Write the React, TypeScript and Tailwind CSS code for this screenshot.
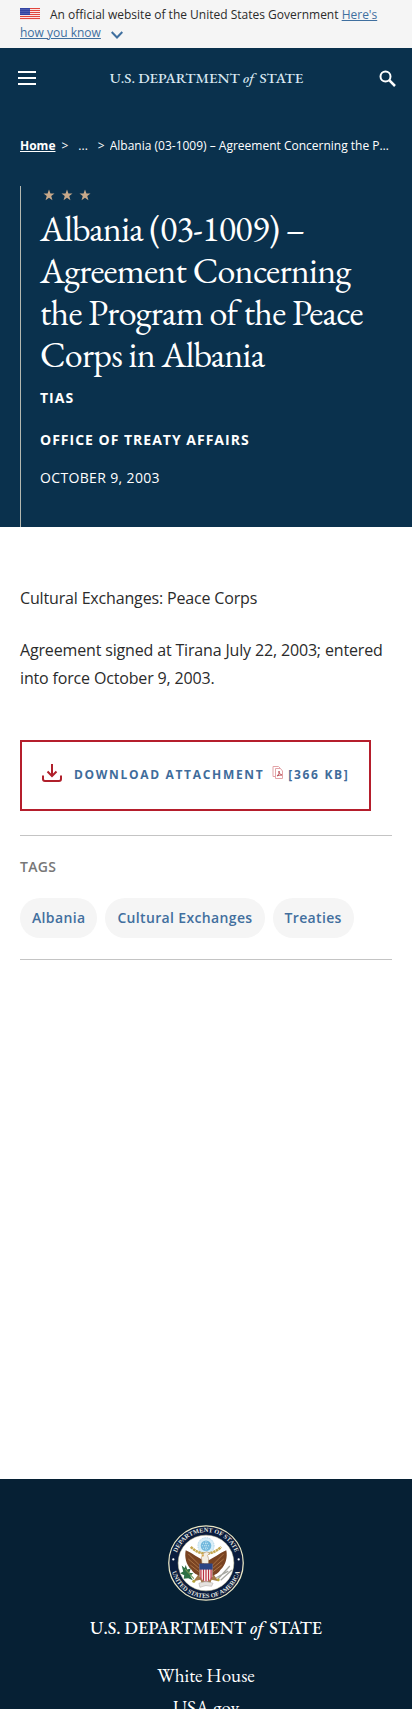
import React from "react";

const serif = "font-['EB_Garamond','Liberation_Serif',serif]";

function Flag() {
  return (
    <svg viewBox="0 0 20 12" className="mr-[10px] inline-block h-3 w-5 align-[-1px]" aria-hidden="true">
      <rect width="20" height="12" fill="#fff" />
      {[0, 2, 4, 6, 8, 10].map((y) => (
        <rect key={y} y={y} width="20" height="1.15" fill="#e0453c" />
      ))}
      <rect width="10" height="7" fill="#2f3f9f" />
      {[1, 3, 5].map((y) =>
        [1, 3, 5, 7, 9].map((x) => <circle key={`${x}-${y}`} cx={x} cy={y + 0.3} r="0.45" fill="#b9c0ee" />),
      )}
    </svg>
  );
}

function Star() {
  return (
    <svg viewBox="0 0 24 24" className="size-3" fill="#c8a98a" aria-hidden="true">
      <path d="M12 1l2.9 7.9 8.1.2-6.5 5.1L18.900 22.500 12 17.600 5.100 22.500l2.400-8.300L1 9.100l8.100-.2z" />
    </svg>
  );
}

function Seal() {
  return (
    <svg viewBox="0 0 150 150" className="size-[76px]" role="img" aria-label="Department of State seal">
      <defs>
        <path id="arcTop" d="M14 75a61 61 0 0 1 122 0" />
        <path id="arcBottom" d="M6 75a69 69 0 0 0 138 0" />
      </defs>
      <circle cx="75" cy="75" r="73.500" fill="#0a1c3d" stroke="#e9e6c4" strokeWidth="2.500" />
      <circle cx="75" cy="75" r="55" fill="#fff" stroke="#d9d2a6" strokeWidth="1" />
      <g fill="#e4e6e0" fontFamily="Liberation Serif, serif" fontSize="12.500" fontWeight="700" textAnchor="middle">
        <text>
          <textPath href="#arcTop" startOffset="50%">DEPARTMENT OF STATE</textPath>
        </text>
        <text>
          <textPath href="#arcBottom" startOffset="50%">UNITED STATES OF AMERICA</textPath>
        </text>
      </g>
      <circle cx="10.500" cy="68" r="2.200" fill="#fff" />
      <circle cx="139.500" cy="68" r="2.200" fill="#fff" />
      <circle cx="75" cy="41" r="16" fill="#d8eef8" stroke="#9ac8df" strokeWidth="1.500" strokeDasharray="2 1.500" />
      <circle cx="75" cy="41" r="10.500" fill="#73b9dd" />
      <path d="M69 36h12M67 41h16M69 46h12M75 32v18" stroke="#c9e7f5" strokeWidth="2" strokeDasharray="2 2" />
      <path d="M45 43q14 14 30 13q16 1 30-13" fill="none" stroke="#c5a74f" strokeWidth="5" strokeDasharray="5 1" />
      <path d="M71 70C60 66 49 56 35 50c-3 13 1 29 11 38 3 5 7 9 12 10l5 8 8-12zM79 70c11-4 22-14 36-20 3 13-1 29-11 38-3 5-7 9-12 10l-5 8-8-12z" fill="#794322" />
      <path d="M40 57l22 22M40 67l21 18M44 79l17 13M110 57L88 79M110 67L89 85M106 79L89 92" stroke="#b07849" strokeWidth="1.800" />
      <path d="M67 76l-1-12 5-9q6-5 11 1l-4 4 2 6v10z" fill="#f3eee4" stroke="#a57b54" strokeWidth="1" />
      <path d="M71 58l-6 3 5 1z" fill="#d9a035" />
      <path d="M59 99l-9 12 14-3 3 8h16l3-8 14 3-9-12z" fill="#a37745" />
      <path d="M62 77h26v24q-3 8-13 12-10-4-13-12z" fill="#fff" stroke="#804936" strokeWidth="1" />
      <path d="M65 87v20M70 87v23M75 87v25M80 87v23M85 87v20" stroke="#bb3041" strokeWidth="2.500" />
      <path d="M62 76h26v12H62z" fill="#2c4484" />
      <path d="M27 80l6 5 2-6 3 9 7-2-3 8 8 1-6 5 5 9-9-4-9 1 1-7-8-4 6-3z" fill="#2f7045" />
      <path d="M34 87l17 19" stroke="#719450" strokeWidth="2" />
      <path d="M99 106l23-25M104 109l22-20M95 104l24-13" stroke="#a7a9a2" strokeWidth="2.500" />
      <circle cx="51" cy="111" r="3" fill="#b5a43a" />
      <circle cx="99" cy="108" r="3" fill="#b5a43a" />
      <path d="M61 115q14-6 28 0l-3 6q-11-4-23 2z" fill="#e5e2df" stroke="#aaa4a0" strokeWidth="1" />
    </svg>
  );
}

function DownloadIcon() {
  return (
    <svg viewBox="0 0 20 18" className="mb-1 h-[18px] w-5 shrink-0" fill="none" stroke="#b0202b" strokeWidth="2" aria-hidden="true">
      <path d="M10 0v11.500M5.500 7.500L10 12l4.500-4.500" />
      <path d="M1 11.500v3.500q0 2 2 2h14q2 0 2-2v-3.500" />
    </svg>
  );
}

function PdfIcon() {
  return (
    <svg viewBox="0 0 12 13" className="mb-1 ml-2 h-[13px] w-3 shrink-0" fill="none" stroke="#e3a4a8" strokeWidth="1" aria-hidden="true">
      <path d="M3.500 10.500h-2.500V.5h5.500l2 2" />
      <path d="M3.500 2.500h5l2 2.500v7.500h-7z" />
      <path d="M5 10q3-2 2-5-1 3 3 4-3 0-5 1z" stroke="#c05a62" />
    </svg>
  );
}

function Wordmark({ className }: { className: string }) {
  return (
    <span className={`${serif} font-medium whitespace-nowrap ${className}`}>
      U.S. DEPARTMENT <i className="mr-[2px]">of</i> STATE
    </span>
  );
}

export default function App() {
  return (
    <div className="flex max-h-screen min-h-screen flex-col overflow-hidden bg-white font-['Open_Sans',sans-serif] text-[#2b2b2b]">
      <div className="bg-[#f5f5f5] px-5 py-[6px] text-xs leading-[18px]">
        <Flag />
        An official website of the United States Government{" "}
        <a href="#how" className="text-[#3f6f9f]">
          <span className="underline">Here's how you know</span>
          <svg viewBox="0 0 12 8" className="ml-[10px] inline-block h-2 w-3 align-[-2px]" fill="none" stroke="currentColor" strokeWidth="2" aria-hidden="true">
            <path d="M.7 1L6 6.500 11.300 1" />
          </svg>
        </a>
      </div>

      <div className="bg-[#0a314d] text-white">
        <header className="flex h-[60px] items-center justify-between px-4">
          <button aria-label="Menu" className="flex w-[22px] flex-col gap-1 px-[2px]">
            <span className="h-[2px] bg-white" />
            <span className="h-[2px] bg-white" />
            <span className="h-[2px] bg-white" />
          </button>
          <a href="#home" className="pr-1 pb-[2px] leading-none text-[#d9e8f2]">
            <Wordmark className="text-[15px]" />
          </a>
          <button aria-label="Search">
            <svg viewBox="0 0 17 17" className="size-[17px]" fill="none" stroke="#fff" strokeWidth="2" aria-hidden="true">
              <circle cx="6.500" cy="6.500" r="5" />
              <path d="M10.200 10.200l5.800 5.800" strokeWidth="2.500" />
            </svg>
          </button>
        </header>

        <nav aria-label="Breadcrumb" className="flex px-5 pt-[29px] text-xs leading-[18px]">
          <a href="#home" className="font-bold underline">Home</a>
          <span className="ml-[6px]">&gt;</span>
          <span className="ml-[10px]">...</span>
          <span className="ml-[10px]">&gt;</span>
          <span className="ml-[5px] min-w-0 truncate">Albania (03-1009) – Agreement Concerning the Program of the Peace Corps in Albania</span>
        </nav>

        <section className="mt-[31px] ml-5 border-l border-[#b5b8b0] pr-5 pb-[39px] pl-[19px]">
          <div className="flex gap-[6px] pt-[3px] pl-[3px]">
            <Star />
            <Star />
            <Star />
          </div>
          <h1 className={`${serif} mt-[7px] text-4xl leading-[42px] tracking-[-0.02em]`}>
            Albania (03-1009) – Agreement Concerning the Program of the Peace Corps in Albania
          </h1>
          <p className="mt-3 text-sm font-bold tracking-[1px]">TIAS</p>
          <p className="mt-[22px] text-sm font-bold tracking-[1px]">OFFICE OF TREATY AFFAIRS</p>
          <p className="mt-[18px] text-sm tracking-wide">OCTOBER 9, 2003</p>
        </section>
      </div>

      <main className="px-5 pt-[57px]">
        <p className="leading-7 tracking-[-0.01em]">Cultural Exchanges: Peace Corps</p>
        <p className="mt-6 leading-7 tracking-[-0.01em]">Agreement signed at Tirana July 22, 2003; entered into force October 9, 2003.</p>

        <a href="#download" className="mt-12 inline-flex h-[71px] items-center border-2 border-[#b51e2c] px-5 pb-[2px] text-xs font-bold tracking-[0.14em] text-[#3f6c9b]">
          <DownloadIcon />
          <span className="ml-3">DOWNLOAD ATTACHMENT</span>
          <PdfIcon />
          <span className="ml-1">[366 KB]</span>
        </a>

        <section className="mt-6 border-y border-[#c4c4c4] pt-[21px] pb-[21px]">
          <h2 className="text-sm font-semibold tracking-wide text-[#777]">TAGS</h2>
          <ul className="mt-[21px] flex flex-wrap gap-2 text-sm font-semibold tracking-wide text-[#426f9e]">
            {["Albania", "Cultural Exchanges", "Treaties"].map((tag) => (
              <li key={tag}>
                <a href="#tag" className="block rounded-full bg-[#f5f5f5] px-3 py-[10px] leading-5">{tag}</a>
              </li>
            ))}
          </ul>
        </section>
      </main>

      <footer className="mt-[519px] flex shrink-0 flex-col items-center bg-[#062034] pt-[46px] text-white">
        <Seal />
        <Wordmark className="mt-[15px] text-lg leading-6" />
        <ul className={`${serif} mt-5 text-center text-[19px] leading-8`}>
          <li><a href="#whitehouse">White House</a></li>
          <li><a href="#usagov">USA.gov</a></li>
        </ul>
      </footer>
    </div>
  );
}
